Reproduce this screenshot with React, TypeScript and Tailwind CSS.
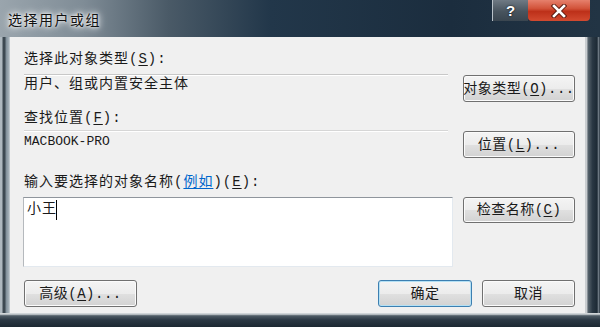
import React from "react";

const FONT = "'Liberation Mono', 'Noto Sans CJK SC', monospace";

function U({ c }: { c: string }) {
  return <span className="underline underline-offset-[2px]">{c}</span>;
}

function Btn({
  children,
  w,
  h = "h-[27px]",
  primary = false,
}: {
  children: React.ReactNode;
  w: string;
  h?: string;
  primary?: boolean;
}) {
  return (
    <div
      className={`${w} ${h} shrink-0 rounded-[3px] border ${
        primary
          ? "border-[#3c7fb1] shadow-[inset_0_0_0_1px_#b4e0f4]"
          : "border-[#707070] shadow-[inset_0_0_0_1px_#fbfbfb]"
      } bg-[linear-gradient(#f4f4f4_0%,#ececec_50%,#e0e0e0_51%,#d2d2d2_100%)] flex items-center justify-center text-[14px] leading-none text-[#1a1a1a] tracking-[0.5px] whitespace-nowrap`}
    >
      {children}
    </div>
  );
}

export default function App() {
  return (
    <div
      className="w-[600px] h-[327px] flex flex-col overflow-hidden bg-[#22303b]"
      style={{ fontFamily: FONT }}
    >
      {/* Title bar */}
      <div className="h-[37px] shrink-0 flex items-start bg-[linear-gradient(to_right,#9aa5ad_0%,#7f8c96_14%,#4a5a67_28%,#22374a_45%,#1b2d3e_75%,#223444_100%)]">
        <div className="h-[37px] flex items-center pl-[8px]">
          <span
            className="text-[14px] leading-none tracking-[1.5px] text-[#111] [text-shadow:0_0_6px_#fff,0_0_10px_#fff,0_0_3px_#fff]"
            style={{ fontFamily: "'Noto Sans CJK SC', sans-serif" }}
          >
            选择用户或组
          </span>
        </div>
        <div className="flex-1" />
        <div className="flex mr-[10px]">
          <div className="w-[36px] h-[21px] border-l border-[#b9c2c9] bg-[linear-gradient(#6f7a84,#48545e_55%,#3a4650)] flex items-center justify-center text-white text-[15px] font-bold leading-none [text-shadow:0_0_2px_#000]" style={{ fontFamily: "'Liberation Sans', sans-serif" }}>
            ?
          </div>
          <div className="w-[62px] h-[21px] rounded-bl-[4px] rounded-br-[4px] bg-[linear-gradient(#e6806c_0%,#d2533a_40%,#bd3019_55%,#d24a30_100%)] flex items-center justify-center">
            <svg width="16" height="14" viewBox="0 0 16 14">
              <path d="M3 2 L13 12 M13 2 L3 12" stroke="#5a1a10" strokeWidth="4.5" strokeLinecap="square" />
              <path d="M3 2 L13 12 M13 2 L3 12" stroke="#ffffff" strokeWidth="2.6" strokeLinecap="square" />
            </svg>
          </div>
        </div>
      </div>

      {/* Body */}
      <div className="flex h-[276px] shrink-0">
        <div className="w-[10px] shrink-0 bg-[linear-gradient(to_right,#aeb8bf_0%,#aeb8bf_20%,#3d4952_30%,#3d4952_50%,#7e8d98_60%,#a7b3bb_90%,#d4dade_100%)]" />
        <div className="w-[575px] shrink-0 bg-[#f0f0f0] pl-[14px] pr-[10px] pt-[13px] flex flex-col text-[14px] tracking-[1px] text-[#1a1a1a]">
          {/* Section 1 */}
          <div className="flex gap-[15px]">
            <div className="w-[424px] flex flex-col">
              <div className="h-[24px] leading-[18px]">
                选择此对象类型(<U c="S" />):
              </div>
              <div className="h-[1px] bg-[#c8c8c8]" />
              <div className="h-[1px] bg-white" />
              <div className="h-[26px] leading-[16px] pt-[0px]">用户、组或内置安全主体</div>
            </div>
            <div className="flex items-end">
              <Btn w="w-[112px]">
                对象类型(<U c="O" />)...
              </Btn>
            </div>
          </div>

          {/* Section 2 */}
          <div className="flex gap-[15px]">
            <div className="w-[424px] flex flex-col">
              <div className="h-[28px] flex items-end pb-[3px] leading-[18px]">
                <span>
                  查找位置(<U c="F" />):
                </span>
              </div>
              <div className="h-[1px] bg-[#d6d6d6]" />
              <div className="h-[1px] bg-white" />
              <div className="h-[26px] pt-[2px] leading-[16px] text-[13px] tracking-[0px]">MACBOOK-PRO</div>
            </div>
            <div className="flex items-end">
              <Btn w="w-[112px]">
                位置(<U c="L" />)...
              </Btn>
            </div>
          </div>

          {/* Section 3 */}
          <div className="h-[39px] flex items-end pb-[6px] leading-[18px]">
            <span>
              输入要选择的对象名称(<span className="text-[#0066cc] underline underline-offset-[2px]">例如</span>)(<U c="E" />):
            </span>
          </div>
          <div className="flex gap-[10px] items-start">
            <div className="w-[430px] h-[70px] -ml-[1px] bg-white border border-[#e3e9ef] border-t-[#8f959c] border-l-[#b5b9bd] pl-[3px] pt-[2px] flex items-start">
              <span className="leading-[18px]">小王</span>
              <span className="w-[1px] h-[20px] bg-black -ml-[1px]" />
            </div>
            <Btn w="w-[112px]" h="h-[26px]">
              检查名称(<U c="C" />)
            </Btn>
          </div>

          {/* Bottom buttons */}
          <div className="flex mt-[13px] items-center">
            <Btn w="w-[113px]">
              高级(<U c="A" />)...
            </Btn>
            <div className="flex-1" />
            <Btn w="w-[94px]" primary>
              确定
            </Btn>
            <div className="w-[10px]" />
            <Btn w="w-[93px]">取消</Btn>
          </div>
        </div>
        <div className="w-[15px] shrink-0 bg-[linear-gradient(to_right,#c9cdd0_0%,#c9cdd0_12%,#58646d_20%,#2a3844_50%,#1d2a35_80%,#6c7882_90%,#2a3641_100%)]" />
      </div>

      {/* Bottom frame */}
      <div className="h-[14px] shrink-0 bg-[linear-gradient(#d0d5d8_0%,#d0d5d8_8%,#4f5c66_20%,#2b3844_50%,#1c2832_100%)]" />
    </div>
  );
}
